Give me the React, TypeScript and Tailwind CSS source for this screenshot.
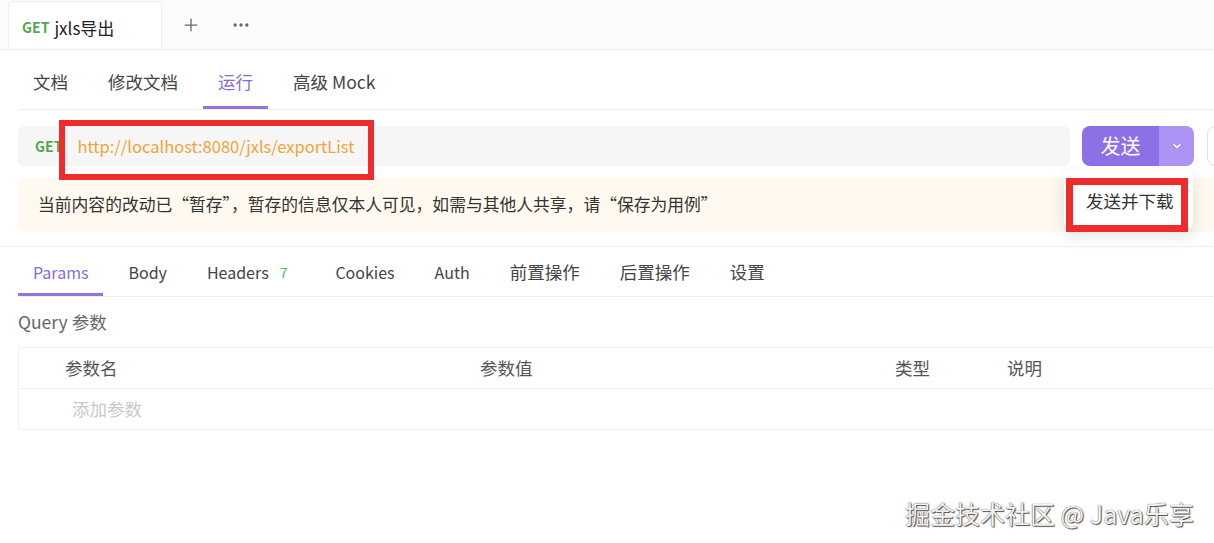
import { Plus, MoreHorizontal, ChevronDown } from "lucide-react";

const font = { fontFamily: '"Noto Sans CJK SC", "Noto Sans", sans-serif' };

const SubTab = ({ label, active }: { label: string; active?: boolean }) => (
  <div
    className={
      "h-full flex items-center px-[15px] pt-[8px] text-[17.5px] border-b-[3px] " +
      (active ? "text-[#8b6bd9] border-[#9273e0]" : "text-[#444] border-transparent")
    }
  >
    {label}
  </div>
);

const ParamTab = ({ label, active, badge, latin }: { label: string; active?: boolean; badge?: string; latin?: boolean }) => (
  <div
    className={
      "h-full flex items-center px-[15px] pt-[4px] border-b-[3px] " +
      (latin ? "text-[16px] " : "text-[17.5px] ") +
      (active ? "text-[#8b6bd9] border-[#9273e0]" : "text-[#444] border-transparent")
    }
  >
    {label}
    {badge && <span className="ml-[11px] mr-[8px] text-[14px] text-[#5cb85c]">{badge}</span>}
  </div>
);

export default function App() {
  return (
    <div className="relative w-full h-[543px] bg-white overflow-hidden" style={font}>
      {/* top tabs */}
      <div className="h-[50px] bg-[#fbfbfb] border-b border-[#ededed] flex items-end">
        <div className="ml-[8px] w-[154px] h-[48px] bg-white border border-b-0 border-[#f0f0f0] rounded-t-[4px] flex items-center pl-[13px] pt-[4px]">
          <span className="text-[14px] font-bold text-[#52a852]">GET</span>
          <span className="ml-[5px] text-[17px] text-[#222]">jxls导出</span>
        </div>
        <div className="h-[48px] flex items-center ml-[19px]">
          <Plus size={20} strokeWidth={1.5} className="text-[#666]" />
        </div>
        <div className="h-[48px] flex items-center ml-[30px]">
          <MoreHorizontal size={20} strokeWidth={2} className="text-[#666]" />
        </div>
      </div>

      {/* sub tabs */}
      <div className="ml-[18px] h-[60px] border-b border-[#eeeeee] flex gap-[10px]">
        <SubTab label="文档" />
        <SubTab label="修改文档" />
        <SubTab label="运行" active />
        <SubTab label="高级 Mock" />
      </div>

      {/* url row */}
      <div className="mt-[16px] flex items-center pl-[18px]">
        <div className="shrink-0 w-[1052px] h-[40px] bg-[#f6f6f6] rounded-[6px] flex items-center pl-[17px]">
          <span className="text-[14px] font-bold text-[#52a852]">GET</span>
          <span className="ml-[15px] text-[16.5px] text-[#f2a33a]">http://localhost:8080/jxls/exportList</span>
        </div>
        <div className="shrink-0 ml-[12px] h-[40px] w-[112px] flex rounded-[8px] overflow-hidden">
          <div className="w-[77px] bg-[#8d6fe6] flex items-center justify-center text-white text-[20px]">发送</div>
          <div className="flex-1 bg-[#ad94f4] flex items-center justify-center">
            <ChevronDown size={12} strokeWidth={2.5} className="text-white" />
          </div>
        </div>
        <div className="shrink-0 ml-[13px] h-[40px] w-[40px] border border-[#e2e2e2] rounded-l-[8px] bg-white"></div>
      </div>

      {/* notice */}
      <div className="mt-[12px] ml-[18px] h-[54px] bg-[#fff9ef] rounded-l-[6px] flex items-center pl-[20px] text-[16.8px] text-[#333]">
        当前内容的改动已“暂存”，暂存的信息仅本人可见，如需与其他人共享，请“保存为用例”
      </div>

      {/* divider */}
      <div className="mt-[14px] border-t border-[#efefef]"></div>

      {/* params tabs */}
      <div className="ml-[18px] h-[50px] border-b border-[#eeeeee] flex gap-[10px]">
        <ParamTab label="Params" active latin />
        <ParamTab label="Body" latin />
        <ParamTab label="Headers" badge="7" latin />
        <ParamTab label="Cookies" latin />
        <ParamTab label="Auth" latin />
        <ParamTab label="前置操作" />
        <ParamTab label="后置操作" />
        <ParamTab label="设置" />
      </div>

      <div className="ml-[18px] h-[50px] flex items-center text-[17.5px] text-[#666]">Query 参数</div>

      {/* table */}
      <div className="ml-[18px] border border-r-0 border-[#f0f0f0] rounded-l-[4px]">
        <div className="h-[41px] grid grid-cols-[46px_415px_415px_112px_1fr] items-center text-[17.5px] text-[#555] border-b border-[#f0f0f0]">
          <div></div>
          <div>参数名</div>
          <div>参数值</div>
          <div>类型</div>
          <div>说明</div>
        </div>
        <div className="h-[40px] flex items-center pl-[53px] text-[17.5px] text-[#c8c8c8]">添加参数</div>
      </div>

      {/* dropdown menu */}
      <div className="absolute left-[1064px] top-[171px] w-[129px] h-[58px] bg-white rounded-[6px] shadow-[0_6px_16px_rgba(0,0,0,0.12)] flex items-center pl-[22px] pt-[2px] text-[17.5px] text-[#333]">
        发送并下载
      </div>

      {/* annotation boxes */}
      <div className="absolute left-[59px] top-[120px] w-[315px] h-[60px] border-[6px] border-[#f02b2b]"></div>
      <div className="absolute left-[1066px] top-[178px] w-[122px] h-[54px] border-[7px] border-[#f02b2b]"></div>

      {/* watermark */}
      <div className="absolute left-[905px] top-[495px] text-[25px] text-[#f4f4f4] [text-shadow:0_0_1px_#222,1px_1px_1px_#555]">
        掘金技术社区 @ Java乐享
      </div>
    </div>
  );
}
